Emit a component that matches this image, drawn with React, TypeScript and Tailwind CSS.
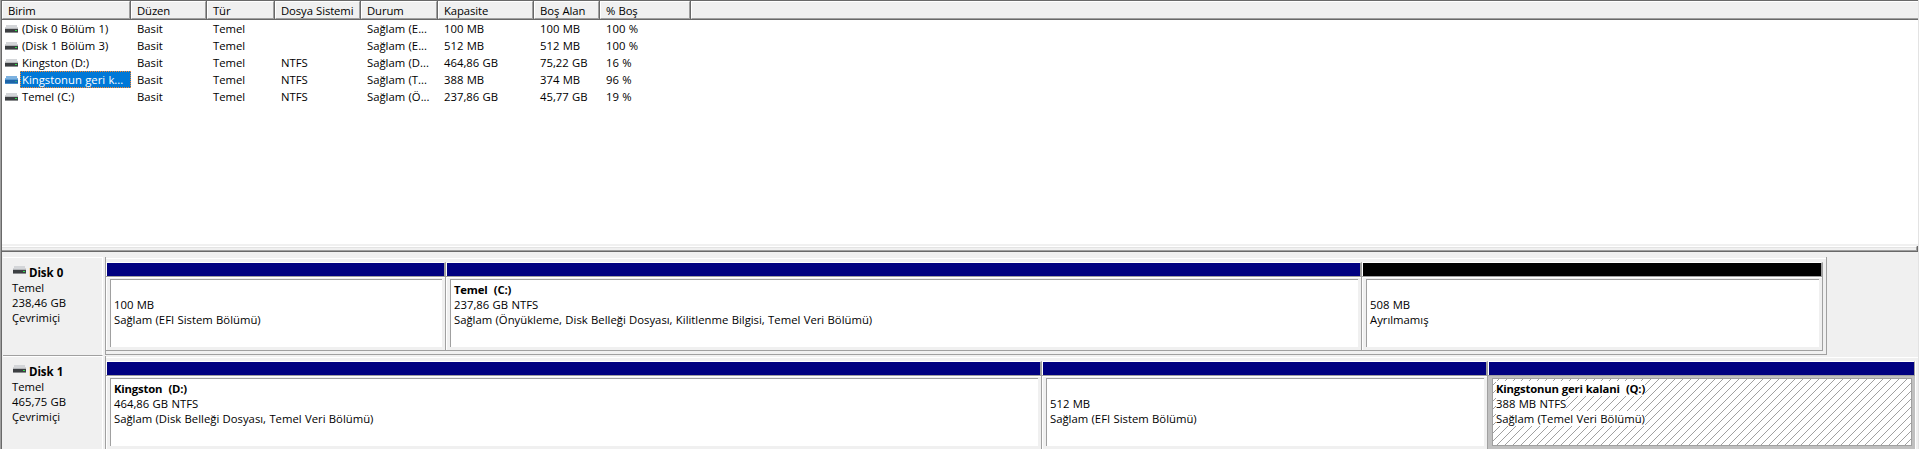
import type { ReactNode } from "react";

const columns = [
  { label: "Birim", w: "w-[129px]" },
  { label: "Düzen", w: "w-[76px]" },
  { label: "Tür", w: "w-[68px]" },
  { label: "Dosya Sistemi", w: "w-[86px]" },
  { label: "Durum", w: "w-[77px]" },
  { label: "Kapasite", w: "w-[96px]" },
  { label: "Boş Alan", w: "w-[66px]" },
  { label: "% Boş", w: "w-[91px]" },
];

const volumes = [
  ["(Disk 0 Bölüm 1)", "Basit", "Temel", "", "Sağlam (E...", "100 MB", "100 MB", "100 %"],
  ["(Disk 1 Bölüm 3)", "Basit", "Temel", "", "Sağlam (E...", "512 MB", "512 MB", "100 %"],
  ["Kingston (D:)", "Basit", "Temel", "NTFS", "Sağlam (D...", "464,86 GB", "75,22 GB", "16 %"],
  ["Kingstonun geri k...", "Basit", "Temel", "NTFS", "Sağlam (T...", "388 MB", "374 MB", "96 %"],
  ["Temel (C:)", "Basit", "Temel", "NTFS", "Sağlam (Ö...", "237,86 GB", "45,77 GB", "19 %"],
];

const SELECTED = 3;

function DriveIcon({ selected = false }: { selected?: boolean }) {
  return (
    <svg width="13" height="8" viewBox="0 0 13 8" className="shrink-0" shapeRendering="crispEdges">
      <path d="M1 0h11l1 4H0z" fill={selected ? "#7db2e0" : "#d3d5d8"} />
      <rect y="4" width="13" height="3" fill={selected ? "#1d64a8" : "#3c3f42"} />
      <rect y="3" width="13" height="1" fill={selected ? "#5b9bd2" : "#b4b6b9"} />
      <rect y="7" width="13" height="1" fill={selected ? "#4a8fca" : "#8a8c8e"} />
      <rect x="10" y="5" width="2" height="1" fill={selected ? "#1fa08c" : "#2fe04a"} />
    </svg>
  );
}

function Hatch() {
  return (
    <svg className="absolute inset-0 h-full w-full" shapeRendering="crispEdges">
      <defs>
        <pattern id="hatch" width="8" height="8" patternUnits="userSpaceOnUse">
          {[0, 1, 2, 3, 4, 5, 6, 7].map((y) => (
            <rect key={y} x={(13 - y) % 8} y={y} width="1" height="1" fill="#a0a0a0" />
          ))}
        </pattern>
      </defs>
      <rect width="100%" height="100%" fill="url(#hatch)" />
    </svg>
  );
}

type PartitionProps = {
  width: string;
  bar?: string;
  name?: string;
  size: string;
  status: ReactNode;
  selected?: boolean;
};

function Partition({ width, bar = "bg-[#000080]", name, size, status, selected = false }: PartitionProps) {
  const cover = selected ? "bg-white" : "";
  return (
    <div className={`flex h-[89px] shrink-0 flex-col ${width}`}>
      <div
        className={`h-[14px] border-t border-l border-t-white border-r-[#a0a0a0] border-l-white ${selected ? "border-r" : "border-r-2"}`}
      >
        <div className={`h-[13px] ${bar}`} />
      </div>
      <div
        className={`flex h-[75px] flex-col border-y border-[#a0a0a0] ${selected ? "bg-[#c0c0c0]" : "border-r bg-[#f0f0f0]"}`}
      >
        <div
          className={`h-[73px] border-t border-l pt-px pr-[3px] pb-[3px] pl-[3px] ${selected ? "border-[#c0c0c0]" : "border-white"}`}
        >
          <div
            className={`relative h-[68px] overflow-hidden border-t border-l border-[#a0a0a0] bg-white ${selected ? "border-r border-b" : ""}`}
          >
            {selected && <Hatch />}
            <div className="relative flex flex-col items-start pt-[2px] pl-[3px] leading-[15px]">
              <b className={`h-[15px] tracking-[-0.19px] whitespace-pre ${cover}`}>{name}</b>
              <span className={`whitespace-pre ${cover}`}>{size}</span>
              <span className={`whitespace-pre ${cover}`}>{status}</span>
            </div>
          </div>
        </div>
      </div>
    </div>
  );
}

function DiskLabel({ name, size }: { name: string; size: string }) {
  return (
    <div className="flex h-[99px] w-[100px] shrink-0 flex-col border-t border-r border-b border-t-white border-r-white border-b-[#a0a0a0] pt-[7px] pl-[9px] leading-[15px]">
      <div className="flex h-[15px] items-start gap-[3px] pl-px">
        <div className="pt-px">
          <DriveIcon />
        </div>
        <b className="text-[11.5px] tracking-[-0.1px]">{name}</b>
      </div>
      <span>Temel</span>
      <span>{size}</span>
      <span>Çevrimiçi</span>
    </div>
  );
}

export default function App() {
  return (
    <div className="h-[449px] w-[1920px] overflow-hidden border-r border-l border-r-white border-l-[#a0a0a0] bg-[#f0f0f0] font-['Open_Sans','Noto_Sans',sans-serif] text-[11.3px] whitespace-nowrap text-black [word-spacing:0.4px]">
      <div className="flex h-full flex-col border-r border-l border-r-[#e3e3e3] border-l-[#696969]">
        <div className="h-[244px] shrink-0 border-t border-[#696969] bg-white">
          <div className="flex h-[19px] border-b border-[#696969] bg-[#f0f0f0]">
            {columns.map((c) => (
              <div key={c.label} className={`h-[18px] shrink-0 border-r border-[#696969] ${c.w}`}>
                <div className="h-[18px] border border-t-white border-r-[#a0a0a0] border-b-[#a0a0a0] border-l-white pl-[5px] leading-[18px] tracking-[-0.1px]">
                  {c.label}
                </div>
              </div>
            ))}
            <div className="h-[18px] flex-1 border-t border-b border-l border-t-white border-b-[#a0a0a0] border-l-white" />
          </div>
          {volumes.map((row, i) => (
            <div key={row[0]} className="flex h-[17px] leading-[17px]">
              {row.map((cell, j) =>
                j === 0 ? (
                  <div key={j} className="flex w-[129px] shrink-0 pl-[3px]">
                    <div className="w-[15px] pt-[5px]">
                      <DriveIcon selected={i === SELECTED} />
                    </div>
                    <div
                      className={`h-[17px] leading-[15px] ${i === SELECTED ? "w-[111px] border border-dotted border-[#ff8728] bg-[#0078d7] pl-px text-white" : "pt-px pl-[2px]"}`}
                    >
                      {cell}
                    </div>
                  </div>
                ) : (
                  <div key={j} className={`shrink-0 pl-[6px] ${columns[j].w}`}>
                    {cell}
                  </div>
                ),
              )}
            </div>
          ))}
        </div>
        <div className="h-[2px] shrink-0" />
        <div className="h-[6px] shrink-0 border-r border-b border-[#696969]">
          <div className="h-[5px] border-t border-r border-b border-t-white border-r-[#a0a0a0] border-b-[#a0a0a0]">
            <div className="h-px bg-[#e3e3e3]" />
          </div>
        </div>

        <div className="flex flex-col pt-[5px] pl-px">
          <div className="flex h-[99px]">
            <DiskLabel name="Disk 0" size="238,46 GB" />
            <div className="ml-[2px] flex h-[98px] border-r border-b border-l border-[#a0a0a0] pt-px">
              <div className="flex border-t border-white pt-[3px] pr-[3px]">
                <Partition width="w-[340px]" size="100 MB" status="Sağlam (EFI Sistem Bölümü)" />
                <Partition
                  width="w-[916px]"
                  name="Temel  (C:)"
                  size="237,86 GB NTFS"
                  status="Sağlam (Önyükleme, Disk Belleği Dosyası, Kilitlenme Bilgisi, Temel Veri Bölümü)"
                />
                <Partition width="w-[461px]" bar="bg-black" size="508 MB" status="Ayrılmamış" />
              </div>
            </div>
          </div>
          <div className="flex h-[99px]">
            <DiskLabel name="Disk 1" size="465,75 GB" />
            <div className="ml-[2px] flex h-[99px] flex-1 border-l border-[#a0a0a0] pt-px">
              <div className="flex flex-1 border-t border-white pt-[3px]">
                <Partition
                  width="w-[936px]"
                  name="Kingston  (D:)"
                  size="464,86 GB NTFS"
                  status="Sağlam (Disk Belleği Dosyası, Temel Veri Bölümü)"
                />
                <Partition width="w-[446px]" size="512 MB" status="Sağlam (EFI Sistem Bölümü)" />
                <Partition
                  width="w-[427px]"
                  name="Kingstonun geri kalani  (Q:)"
                  size="388 MB NTFS"
                  status="Sağlam (Temel Veri Bölümü)"
                  selected
                />
                <div className="h-full w-px bg-white" />
              </div>
            </div>
          </div>
        </div>
      </div>
    </div>
  );
}
